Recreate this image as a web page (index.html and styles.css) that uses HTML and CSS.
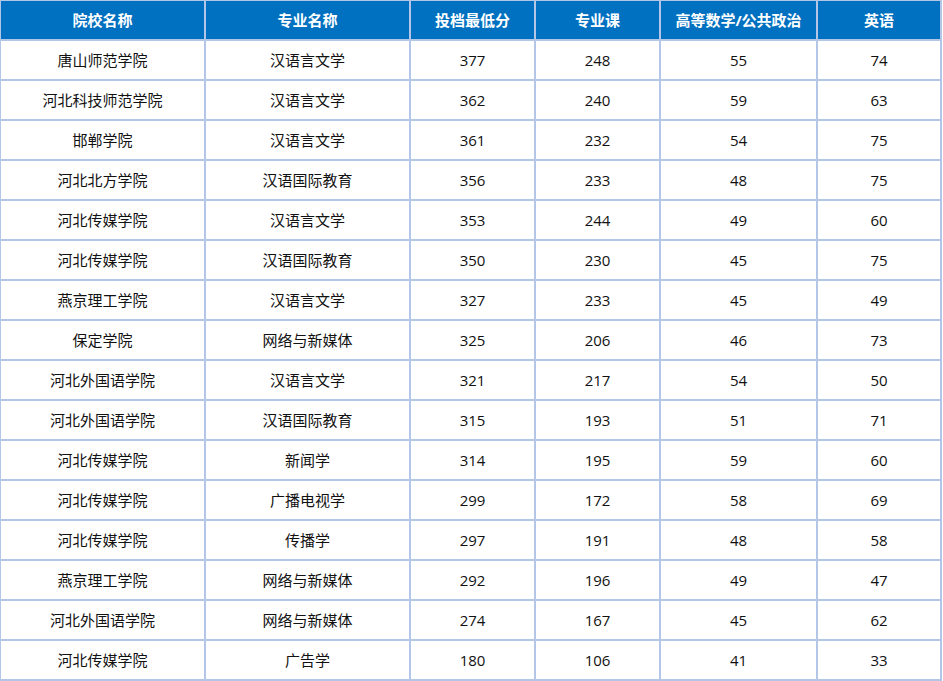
FILE: index.html
```html
<!DOCTYPE html>
<html lang="zh-CN">
<head>
<meta charset="utf-8">
<title>分数线</title>
<link rel="stylesheet" href="styles.css">
</head>
<body>
<table class="score-table">
  <colgroup>
    <col class="c1"><col class="c2"><col class="c3"><col class="c4"><col class="c5"><col class="c6">
  </colgroup>
  <thead>
    <tr><th>院校名称</th><th>专业名称</th><th>投档最低分</th><th>专业课</th><th>高等数学/公共政治</th><th>英语</th></tr>
  </thead>
  <tbody>
    <tr><td>唐山师范学院</td><td>汉语言文学</td><td>377</td><td>248</td><td>55</td><td>74</td></tr>
    <tr><td>河北科技师范学院</td><td>汉语言文学</td><td>362</td><td>240</td><td>59</td><td>63</td></tr>
    <tr><td>邯郸学院</td><td>汉语言文学</td><td>361</td><td>232</td><td>54</td><td>75</td></tr>
    <tr><td>河北北方学院</td><td>汉语国际教育</td><td>356</td><td>233</td><td>48</td><td>75</td></tr>
    <tr><td>河北传媒学院</td><td>汉语言文学</td><td>353</td><td>244</td><td>49</td><td>60</td></tr>
    <tr><td>河北传媒学院</td><td>汉语国际教育</td><td>350</td><td>230</td><td>45</td><td>75</td></tr>
    <tr><td>燕京理工学院</td><td>汉语言文学</td><td>327</td><td>233</td><td>45</td><td>49</td></tr>
    <tr><td>保定学院</td><td>网络与新媒体</td><td>325</td><td>206</td><td>46</td><td>73</td></tr>
    <tr><td>河北外国语学院</td><td>汉语言文学</td><td>321</td><td>217</td><td>54</td><td>50</td></tr>
    <tr><td>河北外国语学院</td><td>汉语国际教育</td><td>315</td><td>193</td><td>51</td><td>71</td></tr>
    <tr><td>河北传媒学院</td><td>新闻学</td><td>314</td><td>195</td><td>59</td><td>60</td></tr>
    <tr><td>河北传媒学院</td><td>广播电视学</td><td>299</td><td>172</td><td>58</td><td>69</td></tr>
    <tr><td>河北传媒学院</td><td>传播学</td><td>297</td><td>191</td><td>48</td><td>58</td></tr>
    <tr><td>燕京理工学院</td><td>网络与新媒体</td><td>292</td><td>196</td><td>49</td><td>47</td></tr>
    <tr><td>河北外国语学院</td><td>网络与新媒体</td><td>274</td><td>167</td><td>45</td><td>62</td></tr>
    <tr><td>河北传媒学院</td><td>广告学</td><td>180</td><td>106</td><td>41</td><td>33</td></tr>
  </tbody>
</table>
</body>
</html>
```
FILE: styles.css
```css
html, body {
  margin: 0;
  padding: 0;
  background: #ffffff;
}
body {
  font-family: "Open Sans", "Noto Sans CJK SC", sans-serif;
  font-size: 15px;
  color: #111111;
}
.score-table {
  border-collapse: collapse;
  table-layout: fixed;
  width: 942px;
  margin: -1px 0 0 -1px;
}
.c1 { width: 205px; }
.c2 { width: 205px; }
.c3 { width: 125px; }
.c4 { width: 125px; }
.c5 { width: 157px; }
.c6 { width: 124px; }
.score-table th,
.score-table td {
  border: 2px solid #b4c6e7;
  height: 38px;
  padding: 0;
  text-align: center;
  vertical-align: middle;
  line-height: 20px;
}
.score-table th {
  background: #0070c0;
  color: #ffffff;
  font-weight: bold;
}
```
